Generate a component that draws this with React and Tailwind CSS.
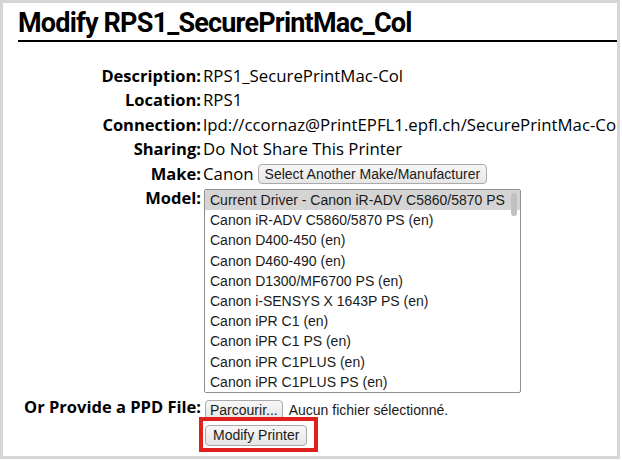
import React from 'react';

const models = [
  'Current Driver - Canon iR-ADV C5860/5870 PS',
  'Canon iR-ADV C5860/5870 PS (en)',
  'Canon D400-450 (en)',
  'Canon D460-490 (en)',
  'Canon D1300/MF6700 PS (en)',
  'Canon i-SENSYS X 1643P PS (en)',
  'Canon iPR C1 (en)',
  'Canon iPR C1 PS (en)',
  'Canon iPR C1PLUS (en)',
  'Canon iPR C1PLUS PS (en)',
];

const MacButton = ({ children, className = '' }) => (
  <button
    className={
      'h-[20px] rounded-[4px] border border-[#a9a9a9] bg-gradient-to-b from-[#f7f7f7] to-[#e6e6e6] text-[14px] leading-none text-[#1a1a1a] font-["Liberation_Sans",sans-serif] ' +
      className
    }
  >
    {children}
  </button>
);

const Row = ({ label, children }) => (
  <>
    <div className="text-right font-bold pr-[2px] text-[16.5px]">{label}</div>
    <div className="whitespace-nowrap text-[16.8px]">{children}</div>
  </>
);

const App = () => {
  return (
    <div className="w-[622px] h-[461px] bg-white">
      <div className="w-[620px] h-[459px] border-[3px] border-[#d6d6d6] overflow-hidden font-['Open_Sans',sans-serif] text-black">
        <h2 className="ml-[15px] mt-[4px] pb-[1px] border-b-2 border-black font-['Roboto',sans-serif] text-[27px] font-bold leading-[32px] tracking-[-0.8px]">
          Modify RPS1_SecurePrintMac_Col
        </h2>
        <div className="grid grid-cols-[200px_1fr] mt-[22px] leading-[24.4px]">
          <Row label="Description:">RPS1_SecurePrintMac-Col</Row>
          <Row label="Location:">RPS1</Row>
          <Row label="Connection:">lpd://ccornaz@PrintEPFL1.epfl.ch/SecurePrintMac-Col</Row>
          <Row label="Sharing:">Do Not Share This Printer</Row>
          <Row label="Make:">
            <div className="flex items-center gap-[4px]">
              <span>Canon</span>
              <MacButton className="px-[6px]">Select Another Make/Manufacturer</MacButton>
            </div>
          </Row>
          <div className="text-right font-bold pr-[2px] text-[16.5px]">Model:</div>
          <div className="pt-[3px] pl-[1px]">
            <div className="relative w-[317px] h-[204px] border border-[#8f8f8f] rounded-[2px] overflow-hidden font-['Liberation_Sans',sans-serif] text-[14px] leading-[20.2px] text-[#1a1a1a]">
              {models.map((m, i) => (
                <div
                  key={m}
                  className={'pl-[5px] pr-[14px] whitespace-nowrap overflow-hidden ' + (i === 0 ? 'bg-[#d4d4d4]' : '')}
                >
                  {m}
                </div>
              ))}
              <div className="absolute right-[3px] top-[3px] w-[6px] h-[23px] rounded-full bg-[#c1c1c1]" />
            </div>
          </div>
          <div className="text-right font-bold pr-[2px] pt-[2px] whitespace-nowrap text-[16.5px]">Or Provide a PPD File:</div>
          <div className="pt-[5px] pl-[2px] flex items-center gap-[6px]">
            <MacButton className="h-[19px] px-[4px]">Parcourir...</MacButton>
            <span className="font-['Liberation_Sans',sans-serif] text-[14px] text-[#1a1a1a]">Aucun fichier sélectionné.</span>
          </div>
          <div />
          <div className="-mt-[5px]">
            <div className="inline-block -ml-[4px] border-[4px] border-[#e0201b] pl-[2px] pr-[7px] py-[1px]">
              <MacButton className="h-[21px] px-[7px]">Modify Printer</MacButton>
            </div>
          </div>
        </div>
      </div>
    </div>
  );
};

export default App;
